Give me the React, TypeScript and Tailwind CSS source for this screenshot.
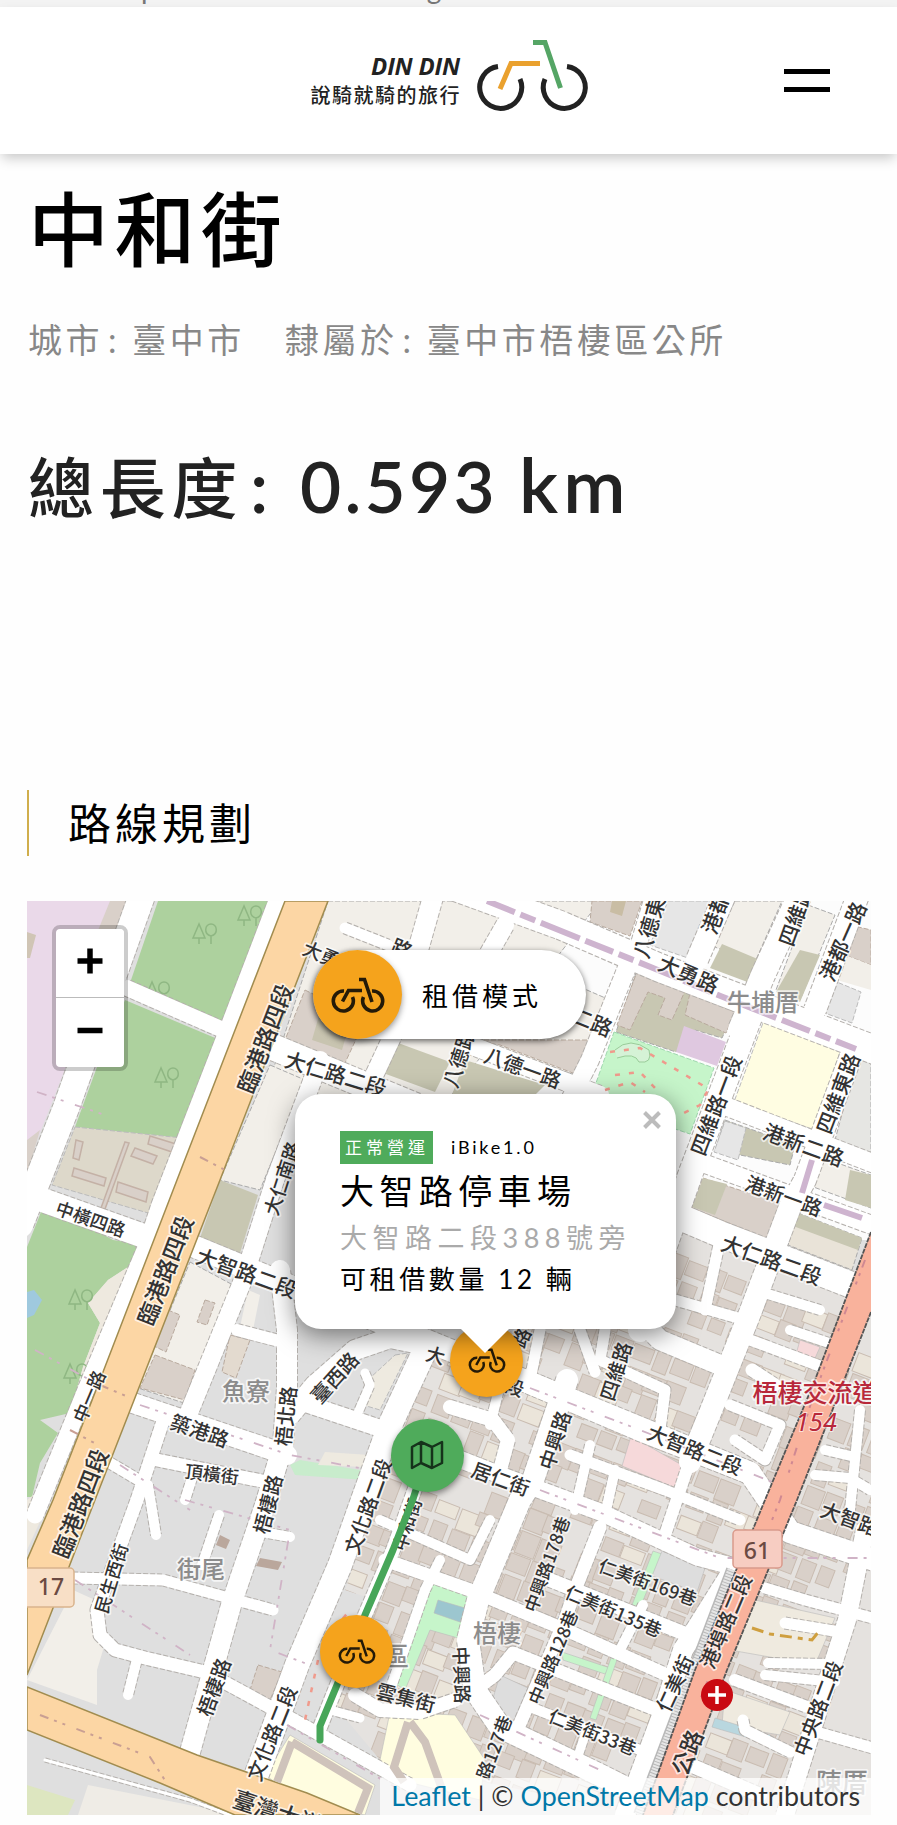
import React from "react";

type Pt = [number, number];
type Road = { p: string; w: number };
type Label = { t: string; x: number; y: number; a?: number; s?: number; ls?: number; c?: string };

const CJK = "font-['Lato','Noto_Sans_CJK_TC',sans-serif]";

const blocks: { p: string; c: string; s?: string }[] = [
  { p: "27,901 130,901 53,1100 27,1165", c: "#ead9e9" },
  { p: "110,901 150,901 125,965 70,1000 90,950", c: "#d9d0c9" },
  { p: "27,1140 40,1130 30,1165 27,1172", c: "#d9d0c9" },
  { p: "27,932 36,935 30,958 27,958", c: "#d0c5b5" },
  { p: "158,901 270,901 223,1022 130,983", c: "#add19e" },
  { p: "125,1000 220,1040 183,1138 75,1127 97,1067", c: "#add19e" },
  { p: "75,1127 183,1138 155,1215 52,1185", c: "#ddd8ca", s: "#bbb" },
  { p: "45,1202 113,1240 140,1244 128,1267 108,1280 88,1303 100,1323 83,1367 70,1413 40,1420 58,1433 40,1463 32,1497 27,1497 27,1247", c: "#add19e" },
  { p: "140,1244 145,1250 90,1380 70,1413 83,1367 100,1323 88,1303 108,1280 128,1267", c: "#eee9df" },
  { p: "27,1292 34,1290 42,1300 34,1315 27,1318", c: "#9fc9de" },
  { p: "27,1500 40,1490 50,1500 27,1550", c: "#eee9df" },
  { p: "328,901 600,901 440,1110 260,1110", c: "#f2efe9", s: "#aaa" },
  { p: "305,990 365,1020 345,1063 285,1040", c: "#d9d0c9", s: "#b9aa9e" },
  { p: "320,1012 350,1022 342,1050 312,1040", c: "#c8c4b0" },
  { p: "390,1040 450,1062 435,1092 375,1070", c: "#c8c7b2" },
  { p: "270,1065 305,1080 260,1190 220,1180", c: "#f2efe9", s: "#aaa" },
  { p: "220,1180 258,1195 240,1253 200,1238", c: "#c8c7b2" },
  { p: "190,1262 233,1285 190,1405 138,1388", c: "#f2efe9", s: "#aaa" },
  { p: "205,1300 215,1303 207,1325 197,1322", c: "#d9d0c9", s: "#b9aa9e" },
  { p: "168,1310 180,1315 166,1352 152,1345", c: "#d9d0c9", s: "#b9aa9e" },
  { p: "155,1355 195,1370 185,1400 140,1388", c: "#d9d0c9", s: "#b9aa9e" },
  { p: "248,1290 260,1295 253,1330 240,1327", c: "#f2efe9" },
  { p: "230,1335 250,1340 236,1378 222,1372", c: "#e3dacf", s: "#b9aa9e" },
  { p: "395,1355 408,1353 380,1410 363,1405 370,1378", c: "#eeeae0", s: "#bbb" },
  { p: "290,1465 300,1460 360,1470 365,1480 295,1475", c: "#c8eccc" },
  { p: "325,1452 370,1455 365,1467 318,1465", c: "#eeeae0" },
  { p: "260,1558 282,1562 278,1570 256,1566", c: "#baa79c" },
  { p: "220,1535 230,1540 226,1549 216,1545", c: "#baa79c" },
  { p: "258,1665 282,1672 270,1700 250,1690", c: "#d9d0c9", s: "#b9aa9e" },
  { p: "73,1590 95,1600 103,1650 97,1670 97,1705 27,1680", c: "#f2efe9" },
  { p: "27,1785 75,1800 68,1815 27,1815", c: "#dde6c0" },
  { p: "88,1785 240,1815 78,1815", c: "#efece6" },
  { p: "490,948 610,1000 590,1080 440,1030", c: "#f2efe9", s: "#aaa" },
  { p: "470,1040 590,1040 578,1075 500,1045", c: "#d9d0c9", s: "#b9aa9e" },
  { p: "465,1060 545,1085 530,1100 450,1100", c: "#c8c7b2" },
  { p: "592,901 642,901 630,936 590,922", c: "#d9d0c9", s: "#b9aa9e" },
  { p: "612,901 626,901 622,916 610,912", c: "#c9bda4" },
  { p: "668,901 715,901 688,958 650,945", c: "#e6e6e6", s: "#bbb" },
  { p: "735,901 782,901 755,962 712,946", c: "#f2efe9", s: "#aaa" },
  { p: "722,944 760,960 750,983 710,968", c: "#c8c7b2" },
  { p: "808,905 835,915 800,1000 776,990", c: "#f2efe9", s: "#aaa" },
  { p: "800,950 820,955 800,1002 776,992", c: "#c8c7b2" },
  { p: "850,925 871,930 871,965 845,955", c: "#d9d0c9", s: "#b9aa9e" },
  { p: "845,955 871,965 871,990 830,978", c: "#f2efe9" },
  { p: "832,980 861,992 852,1023 822,1012", c: "#e6e6e6", s: "#bbb" },
  { p: "637,970 735,1010 722,1038 695,1030 676,1052 616,1032", c: "#c8c7b2", s: "#aaa" },
  { p: "637,972 685,991 672,1020 658,1015 665,998 648,992 630,1030 617,1025", c: "#d9d0c9", s: "#b9aa9e" },
  { p: "690,993 735,1012 726,1033 685,1015", c: "#d9d0c9", s: "#b9aa9e" },
  { p: "684,1026 726,1042 717,1066 676,1052", c: "#dfc8e0" },
  { p: "614,1032 714,1068 690,1134 590,1100", c: "#c6f5ca", s: "#9fd8ae" },
  { p: "764,1020 840,1052 815,1130 734,1102", c: "#fffde2", s: "#bbb" },
  { p: "858,1055 871,1060 871,1155 835,1140", c: "#e6e6e3", s: "#aaa" },
  { p: "725,1120 795,1145 790,1165 715,1150", c: "#c8c7b2", s: "#aaa" },
  { p: "725,1121 746,1128 738,1160 714,1152", c: "#e6e6e6", s: "#bbb" },
  { p: "815,1155 871,1175 871,1208 808,1185", c: "#f2efe9", s: "#aaa" },
  { p: "850,1170 871,1175 871,1208 845,1200", c: "#c8c7b2" },
  { p: "703,1178 782,1204 770,1240 692,1208", c: "#d9d0c9", s: "#b9aa9e" },
  { p: "703,1178 727,1184 715,1215 692,1207", c: "#c8c7b2" },
  { p: "798,1213 862,1238 852,1270 788,1245", c: "#e9e3d8", s: "#aaa" },
  { p: "798,1213 862,1238 858,1250 793,1226", c: "#c8c7b2" },
];

const parks: { p: string; c: string }[] = [
  { p: "425,1582 480,1596 465,1640 430,1630 405,1690 390,1680", c: "#c6f5ca" },
  { p: "438,1600 465,1608 460,1622 434,1613", c: "#9cc6cf" },
  { p: "290,1735 375,1785 365,1815 300,1800 265,1775", c: "#fffde0" },
  { p: "390,1712 455,1715 485,1760 480,1800 400,1780 380,1760", c: "#fffde0" },
  { p: "631,1436 687,1468 678,1489 622,1466", c: "#f6d9da" },
  { p: "800,1340 820,1347 812,1365 795,1358", c: "#f6d9da" },
  { p: "653,1551 662,1554 640,1608 632,1605", c: "#c6f5ca" },
  { p: "562,1652 610,1668 605,1674 563,1660", c: "#c6f5ca" },
  { p: "612,1655 618,1657 596,1720 590,1718", c: "#c6f5ca" },
  { p: "755,1600 835,1618 815,1665 730,1650", c: "#efeadf" },
  { p: "725,1690 790,1712 780,1735 722,1725", c: "#efeadf" },
  { p: "715,1718 770,1735 790,1750 712,1727", c: "#b9d7df" },
  { p: "662,1551 705,1568 697,1592 652,1576", c: "#dddddd" },
  { p: "500,1675 528,1688 512,1725 490,1708", c: "#dddddd" },
];

const roads: Road[] = [
  { p: "277,901 222,1045 160,1205 145,1250 88,1385 35,1515", w: 17 },
  { p: "144,890 66,1108 20,1225", w: 26 },
  { p: "127,988 230,1033", w: 16 },
  { p: "20,1192 155,1240", w: 24 },
  { p: "345,928 388,945", w: 11 },
  { p: "435,890 418,950", w: 20 },
  { p: "372,1080 400,1020", w: 18 },
  { p: "275,1048 500,1141 720,1234 880,1296", w: 26 },
  { p: "193,1246 300,1290 430,1342 523,1380 640,1430 750,1473 790,1532 880,1562", w: 22 },
  { p: "523,1380 750,1473", w: 22 },
  { p: "133,1403 287,1455", w: 20 },
  { p: "157,1460 267,1482", w: 13 },
  { p: "110,1463 147,1485", w: 11 },
  { p: "165,1415 137,1500 97,1610 100,1635 115,1650 145,1658 205,1672 235,1688 290,1718 410,1785", w: 13 },
  { p: "148,1485 156,1535", w: 10 },
  { p: "192,1478 185,1500", w: 10 },
  { p: "219,1515 202,1565", w: 10 },
  { p: "73,1578 163,1580 273,1610", w: 11 },
  { p: "138,1655 128,1695", w: 10 },
  { p: "190,1752 232,1602 265,1505 283,1445 287,1387 287,1330 280,1270", w: 20 },
  { p: "188,1415 243,1280 275,1180 320,1060", w: 18 },
  { p: "237,1330 283,1342", w: 12 },
  { p: "262,1532 290,1537", w: 10 },
  { p: "240,1820 297,1665 340,1565 363,1500 390,1425 425,1350", w: 24 },
  { p: "290,1415 315,1385 355,1350 390,1338 425,1345", w: 20 },
  { p: "365,1373 370,1385 357,1415", w: 9 },
  { p: "295,1400 385,1430 500,1475 600,1512 697,1557 735,1567", w: 17 },
  { p: "450,1407 493,1420 508,1440 500,1470", w: 14 },
  { p: "427,1455 393,1550 365,1615 337,1685 319,1730", w: 14 },
  { p: "500,1385 490,1425", w: 10 },
  { p: "440,1560 425,1590 390,1690", w: 10 },
  { p: "380,1520 470,1560 490,1520", w: 10 },
  { p: "385,1560 470,1590 573,1633 667,1675", w: 13 },
  { p: "355,1695 380,1710 420,1712 455,1700", w: 14 },
  { p: "330,1710 360,1718", w: 9 },
  { p: "567,1380 533,1480 520,1500 478,1600 468,1640 475,1690 500,1727 600,1775 640,1795", w: 22 },
  { p: "475,1690 495,1675 513,1653 657,1710", w: 13 },
  { p: "600,1527 575,1590 565,1620 515,1735", w: 13 },
  { p: "550,1580 683,1633", w: 14 },
  { p: "643,1605 620,1650", w: 10 },
  { p: "530,1707 645,1752", w: 10 },
  { p: "585,1735 575,1765", w: 9 },
  { p: "590,1445 575,1510", w: 10 },
  { p: "690,1460 665,1535", w: 12 },
  { p: "570,1455 665,1490 740,1520", w: 11 },
  { p: "615,1470 605,1515", w: 10 },
  { p: "605,1330 600,1360 665,1390 660,1430", w: 11 },
  { p: "540,1330 530,1380", w: 11 },
  { p: "580,1330 595,1372", w: 11 },
  { p: "650,1330 660,1340 720,1365", w: 20 },
  { p: "675,1300 745,1320", w: 11 },
  { p: "720,1240 705,1310", w: 11 },
  { p: "755,1290 820,1310", w: 10 },
  { p: "750,1340 825,1368", w: 11 },
  { p: "790,1330 835,1345", w: 10 },
  { p: "752,1370 775,1385", w: 13 },
  { p: "730,1405 780,1425 765,1460 735,1440", w: 11 },
  { p: "855,1045 805,1180 790,1207 750,1313 710,1413 690,1462", w: 22 },
  { p: "735,1567 683,1650 663,1713 625,1815", w: 20 },
  { p: "750,1017 690,1175 660,1260 640,1330", w: 24 },
  { p: "450,885 560,925 660,968 880,1052", w: 28 },
  { p: "505,925 485,960", w: 18 },
  { p: "630,960 590,1060 570,1100", w: 18 },
  { p: "655,890 635,957", w: 16 },
  { p: "727,890 697,960", w: 22 },
  { p: "802,890 763,975 740,1030", w: 24 },
  { p: "860,890 815,1010", w: 22 },
  { p: "470,1045 600,1095", w: 18 },
  { p: "720,1104 880,1166", w: 18 },
  { p: "700,1162 880,1228", w: 18 },
  { p: "865,1530 847,1620 830,1673 785,1815", w: 18 },
  { p: "765,1588 805,1600 880,1620", w: 11 },
  { p: "785,1623 840,1632", w: 11 },
  { p: "768,1663 830,1664", w: 10 },
  { p: "765,1675 835,1682", w: 10 },
  { p: "735,1680 810,1708", w: 12 },
  { p: "743,1720 745,1730 790,1752", w: 11 },
  { p: "820,1733 880,1750", w: 11 },
  { p: "695,1767 760,1795", w: 14 },
  { p: "790,1535 870,1555", w: 12 },
  { p: "825,1450 855,1457", w: 10 },
  { p: "815,1475 850,1478 870,1490", w: 10 },
  { p: "860,1410 850,1510", w: 10 },
  { p: "45,1760 190,1800 230,1815", w: 3 },
];

const buildingCells: { x: number; y: number; w: number; h: number; tone: number }[] = [];
for (let r = 0; r < 28; r++) {
  for (let c = 0; c < 28; c++) {
    const k = Math.abs(Math.sin(r * 127.1 + c * 311.7) * 43758.5453) % 1;
    const m = Math.abs(Math.sin(r * 269.5 + c * 183.3) * 24634.6345) % 1;
    if (k < 0.18) continue;
    buildingCells.push({ x: c * 21 + m * 5, y: r * 24 + k * 5, w: 12 + k * 11, h: 13 + m * 11, tone: k });
  }
}

const labels: Label[] = [
  { t: "臨港路四段", x: 264, y: 1038, a: -69, s: 23 },
  { t: "臨港路四段", x: 164, y: 1270, a: -69, s: 23 },
  { t: "臨港路四段", x: 79, y: 1503, a: -69, s: 23 },
  { t: "大勇", x: 322, y: 953, a: 22, s: 19 },
  { t: "八德二路", x: 573, y: 1013, a: 22 },
  { t: "路", x: 402, y: 948, a: 22 },
  { t: "大仁路二段", x: 336, y: 1073, a: 17 },
  { t: "大仁南路", x: 281, y: 1178, a: -72, s: 19 },
  { t: "八德路", x: 458, y: 1058, a: -72, s: 20 },
  { t: "八德一路", x: 523, y: 1067, a: 20, s: 20 },
  { t: "八德東路", x: 651, y: 917, a: -74, s: 21 },
  { t: "港都路", x: 718, y: 903, a: -70, s: 21 },
  { t: "四維路", x: 795, y: 915, a: -70, s: 21 },
  { t: "港都一路", x: 842, y: 941, a: -66, s: 21 },
  { t: "大勇路", x: 689, y: 973, a: 23, s: 21 },
  { t: "四維路一段", x: 715, y: 1105, a: -69, s: 21 },
  { t: "四維東路", x: 837, y: 1093, a: -69, s: 21 },
  { t: "港新二路", x: 804, y: 1144, a: 20, s: 21 },
  { t: "港新一路", x: 784, y: 1195, a: 20, s: 20 },
  { t: "大仁路二段", x: 772, y: 1259, a: 20, s: 21 },
  { t: "中橫四路", x: 91, y: 1218, a: 19, s: 18 },
  { t: "大智路二段", x: 247, y: 1272, a: 20, s: 21 },
  { t: "中一路", x: 88, y: 1396, a: -67, s: 18 },
  { t: "築港路", x: 200, y: 1430, a: 19, s: 20 },
  { t: "頂橫街", x: 212, y: 1473, a: 7, s: 18 },
  { t: "梧北路", x: 285, y: 1416, a: -84, s: 20 },
  { t: "梧棲路", x: 267, y: 1504, a: -76, s: 20 },
  { t: "梧棲路", x: 213, y: 1687, a: -70, s: 20 },
  { t: "臺西路", x: 334, y: 1377, a: -48, s: 20 },
  { t: "文化路二段", x: 367, y: 1506, a: -70, s: 20 },
  { t: "中和街", x: 406, y: 1524, a: -72, s: 18 },
  { t: "文化路二段", x: 271, y: 1733, a: -68, s: 20 },
  { t: "民生西街", x: 110, y: 1578, a: -73, s: 18 },
  { t: "雲集街", x: 406, y: 1697, a: 14, s: 20 },
  { t: "大", x: 436, y: 1354, a: 15, s: 19 },
  { t: "段", x: 515, y: 1386, a: 20, s: 19 },
  { t: "路", x: 520, y: 1337, a: -65, s: 19 },
  { t: "四維路", x: 615, y: 1371, a: -72, s: 20 },
  { t: "中興路", x: 554, y: 1440, a: -72, s: 20 },
  { t: "居仁街", x: 501, y: 1478, a: 20, s: 20 },
  { t: "大智路二段", x: 695, y: 1449, a: 22, s: 20 },
  { t: "中興路178巷", x: 546, y: 1564, a: -70, s: 17.5 },
  { t: "中興路128巷", x: 552, y: 1657, a: -67, s: 17.5 },
  { t: "仁美街169巷", x: 648, y: 1581, a: 20, s: 18 },
  { t: "仁美街135巷", x: 614, y: 1610, a: 23, s: 18 },
  { t: "仁美街33巷", x: 593, y: 1731, a: 22, s: 18 },
  { t: "中興路", x: 463, y: 1675, a: 88, s: 19 },
  { t: "路127巷", x: 493, y: 1747, a: -69, s: 18 },
  { t: "仁美街", x: 674, y: 1683, a: -65, s: 20 },
  { t: "港埠路二段", x: 725, y: 1621, a: -67, s: 20 },
  { t: "中央路二段", x: 817, y: 1708, a: -69, s: 20 },
  { t: "大智路", x: 850, y: 1518, a: 20, s: 20 },
  { t: "公路", x: 686, y: 1752, a: -68, s: 23 },
  { t: "臺灣大道", x: 278, y: 1811, a: 18, s: 23 },
];

const places: Label[] = [
  { t: "牛埔厝", x: 763, y: 1000, s: 24 },
  { t: "魚寮", x: 246, y: 1389, s: 24 },
  { t: "街尾", x: 201, y: 1567, s: 24 },
  { t: "梧棲", x: 497, y: 1631, s: 24 },
  { t: "區", x: 396, y: 1654, s: 26 },
  { t: "陳厝", x: 842, y: 1780, s: 26 },
];

const trees: Pt[] = [[204, 934], [249, 916], [166, 1078], [157, 992], [80, 1300], [75, 1374]];

function MapLabel({ l, place }: { l: Label; place?: boolean }) {
  return (
    <text
      x={l.x}
      y={l.y}
      transform={`rotate(${l.a ?? 0} ${l.x} ${l.y})`}
      fontSize={l.s ?? 21}
      fontWeight={500}
      letterSpacing={l.ls ?? 0}
      textAnchor="middle"
      dominantBaseline="central"
      fill={l.c ?? (place ? "#8c8c8c" : "#333")}
      stroke="#fff"
      strokeOpacity={0.7}
      strokeWidth={3.5}
      strokeLinejoin="round"
      paintOrder="stroke"
    >
      {l.t}
    </text>
  );
}

function BikeIcon({ className }: { className: string }) {
  return (
    <svg viewBox="0 0 54 36" className={className} fill="none" stroke="#241a08" strokeWidth="3.600">
      <path d="M13 14A10 10 0 1 0 21.5 20" />
      <path d="M32.5 20A10 10 0 1 0 41 14" />
      <path d="M11.5 24.500L17.500 13.500H31M28 2.500H33.500L41 25" />
    </svg>
  );
}

function Marker({ x, y, className, children }: { x: number; y: number; className: string; children: React.ReactNode }) {
  return (
    <div
      className={`absolute flex size-[73px] items-center justify-center rounded-full shadow-[0_3px_6px_rgba(0,0,0,0.45)] ${className}`}
      style={{ left: x - 27 - 36.5, top: y - 901 - 36.5 }}
    >
      {children}
    </div>
  );
}

function CityMap() {
  const west = "285,901 177,1180 98,1385 53,1500 27,1560 27,1675 95,1500 138,1390 220,1180 328,901";
  const south = "27,1687 197,1755 307,1793 360,1815 235,1815 160,1783 27,1730";
  const east = "871,1232 815,1380 765,1500 695,1670 643,1815 673,1815 727,1670 797,1500 871,1312";
  return (
    <svg viewBox="27 901 844 914" className="block h-[914px] w-[844px] font-['Noto_Sans_CJK_TC',sans-serif]">
      <defs>
        <clipPath id="town">
          <path d="M425 1345L520 1330L560 1310L690 1210L871 1290V1815H640L380 1760L330 1700L375 1600L345 1590L385 1470Z" />
        </clipPath>
      </defs>
      <rect x="27" y="901" width="844" height="914" fill="#dfdfdf" />
      <path d="M420 901H871V1240H420Z" fill="#fcfcfc" />
      {blocks.map((b, i) => (
        <polygon key={i} points={b.p} fill={b.c} stroke={b.s ?? "none"} strokeDasharray="5 2" />
      ))}
      <g clipPath="url(#town)">
        <path d="M300 1200H871V1815H300Z" fill="#e5e2df" />
        <g transform="translate(396 1144) rotate(21)" stroke="#c9bcb1" strokeWidth="1">
          {buildingCells.map((b, i) => (
            <rect key={i} x={b.x} y={b.y} width={b.w} height={b.h} fill={b.tone > 0.85 ? "#ebe5da" : "#d9d0c9"} />
          ))}
        </g>
      </g>
      {parks.map((b, i) => (
        <polygon key={i} points={b.p} fill={b.c} stroke="#bbb" strokeWidth="0.6" />
      ))}
      <g fill="#d9d0c9" stroke="#c4b1a6" strokeWidth="1.500">
        <path d="M76 1140l7 2l-4 18l-6-2zM74 1168l32 10l-2 8l-32-10zM118 1182l30 10l-2 10l-30-10zM135 1148l22 8l-4 8l-22-8zM125 1142l4 1l-24 66l-4-1zM150 1136l26 8l-4 8l-24-8z" />
      </g>
      <g fill="none" stroke="#8fb783" strokeWidth="1.500">
        {trees.map(([x, y], i) => (
          <path key={i} d={`M${x - 5} ${y - 10}l-6 14h12zM${x - 5} ${y + 4}v6M${x + 7} ${y + 10}v-8c-8-2-6-12 0-12s8 10 0 12`} />
        ))}
      </g>
      <g fill="none" stroke="#b4b0ac" strokeDasharray="5 2" strokeLinejoin="round">
        {roads.map((r, i) => (
          <polyline key={i} points={r.p} strokeWidth={r.w + 2} />
        ))}
      </g>
      <g fill="none" stroke="#fff" strokeLinejoin="round" strokeLinecap="round">
        {roads.map((r, i) => (
          <polyline key={i} points={r.p} strokeWidth={r.w} />
        ))}
      </g>
      <path
        d="M37 1092L105 1115M140 1405L290 1455L370 1470M185 1500L290 1530L270 1650L310 1665M75 1580L190 1655M287 1725L400 1790M530 1388L640 1430L780 1485M540 1490L720 1558L871 1558M35 1350L90 1380M120 1465L190 1510M480 1715L600 1770"
        fill="none"
        stroke="#d0b3c6"
        strokeWidth="1.800"
        strokeDasharray="10 6 3 6 3 12"
      />
      <polygon points={west} fill="#fcd6a4" stroke="#a18c4f" strokeWidth="1.500" />
      <polygon points={south} fill="#fcd6a4" stroke="#a18c4f" strokeWidth="1.500" />
      <path d="M28 1640V1700L60 1701L40 1660Z" fill="#fcd6a4" opacity="0" />
      <path d="M40 1715L150 1757L168 1785M100 1385L126 1396M70 1430L100 1446M200 1157L225 1170" fill="none" stroke="#c99f93" strokeWidth="2" strokeDasharray="9 6 3 6 3 12" />
      <path d="M733 1570L640 1815" stroke="#b8b8b8" strokeWidth="14" />
      <path d="M733 1570L640 1815" stroke="#e6e6e6" strokeWidth="11" strokeDasharray="2 1" />
      <polygon points={east} fill="#f9b29c" />
      <path d="M871 1232L815 1380L765 1500L695 1670L643 1815M871 1312L797 1500L727 1670L673 1815" fill="none" stroke="#555" strokeWidth="1.800" strokeDasharray="5 1" />
      <path d="M865 1260L812 1400L780 1500L700 1700" fill="none" stroke="#cf8892" strokeWidth="2" strokeDasharray="8 6 3 6 3 24" />
      <path d="M487 901L653 968L723 997L856 1049" fill="none" stroke="#ceb4cf" strokeWidth="6" strokeDasharray="30 6 16 6 42 6" />
      <path d="M812 1160L802 1193M824 1205L862 1218" fill="none" stroke="#ceb4cf" strokeWidth="6" />
      <path d="M615 1050q15-14 34 0q4 14-10 12q-4-10-22-4" fill="#d5f2d6" stroke="#9c9" />
      <path d="M610 1052L640 1048L702 1085L708 1090L700 1105L680 1115M615 1075L640 1072L655 1088M605 1090L630 1082L645 1092M325 1640L350 1610M318 1660L305 1720" fill="none" stroke="#f09a8c" strokeWidth="2.500" strokeDasharray="5 9" />
      <path d="M335 1005q10 5 14 10q4 10-4 16q-8-12-10-26" fill="#a9d5e6" />
      <path d="M752 1628L770 1634L812 1640L820 1630" fill="none" stroke="#cf9f3f" strokeWidth="3" strokeDasharray="12 6 5 6" />
      <path d="M408 1722l-14 45l10 15M410 1722l15 20l18 50M292 1742l76 46l-10 25M292 1742l-15 40" fill="none" stroke="#cfc3bb" strokeWidth="8" />
      {places.map((l, i) => (
        <MapLabel key={i} l={l} place />
      ))}
      {labels.map((l, i) => (
        <MapLabel key={i} l={l} />
      ))}
      <MapLabel l={{ t: "梧棲交流道", x: 815, y: 1391, s: 25, c: "#b8283a" }} />
      <text x="816" y="1431" fontSize="25" fontStyle="italic" textAnchor="middle" fill="#b8283a" stroke="#fff" strokeOpacity=".6" strokeWidth="2" paintOrder="stroke" className="font-['Noto_Sans',sans-serif]">154</text>
      <g className="font-['Noto_Sans',sans-serif]" fontSize="23" fontWeight="500" fill="#6b4a42" textAnchor="middle">
        <rect x="20" y="1568" width="54" height="39" rx="4" fill="#f8dfc6" stroke="#d9b48d" strokeWidth="1.500" />
        <text x="51" y="1595">17</text>
        <rect x="733" y="1530" width="49" height="38" rx="4" fill="#f7cdc2" stroke="#d99a8c" strokeWidth="1.500" />
        <text x="757" y="1559">61</text>
      </g>
      <circle cx="717" cy="1695" r="16" fill="#c90a12" />
      <path d="M717 1686v18M708 1695h18" stroke="#fff" strokeWidth="3.500" />
      <path d="M427 1455L412.700 1500L393 1550L365 1615L337 1685L320 1726L320 1740" fill="none" stroke="#47a659" strokeWidth="7" strokeLinecap="round" strokeLinejoin="round" />
    </svg>
  );
}

function Logo() {
  return (
    <div className="flex items-start pt-[33px] pl-[310px]">
      <div className="flex w-[150px] flex-col items-end text-[#222]">
        <span className="mt-[9px] font-['Open_Sans',sans-serif] text-[24px] leading-[34px] font-bold tracking-[-0.200px] whitespace-nowrap italic">DIN DIN</span>
        <span className="-mr-[1px] font-['Noto_Sans_CJK_TC',sans-serif] text-[20px] leading-[24px] font-medium tracking-[1.500px] whitespace-nowrap">說騎就騎的旅行</span>
      </div>
      <svg viewBox="476 38 114 75" className="-mt-[2px] ml-[16px] h-[75px] w-[114px]" fill="none" strokeWidth="5">
        <path d="M498 66.500A21 21 0 1 0 520 79" stroke="#222" />
        <path d="M545 79A21 21 0 1 0 567 66.500" stroke="#222" />
        <path d="M500 89L511 63.500H540" stroke="#eaa12e" />
        <path d="M533 42.500H545L560.500 88" stroke="#55a565" />
      </svg>
    </div>
  );
}

export default function App() {
  return (
    <div className={`h-[1825px] w-[897px] overflow-hidden bg-[#fefefe] text-black ${CJK}`}>
      <div className="flex h-[7px] overflow-hidden bg-[#f3f3f3] text-[28px] leading-[28px] text-[#777]">
        <span className="-mt-[26px] ml-[141px]">p</span>
        <span className="-mt-[26px] ml-[270px]">g</span>
      </div>
      <header className="relative flex h-[147px] bg-white shadow-[0_6px_12px_-2px_rgba(0,0,0,0.22)]">
        <Logo />
        <button aria-label="選單" className="mt-[62px] ml-[194px] flex h-[23px] w-[46px] flex-col justify-between">
          <span className="h-[5px] w-full bg-black" />
          <span className="h-[5px] w-full bg-black" />
        </button>
      </header>

      <main className="px-[27px]">
        <h1 className="pt-[17px] pl-[1px] text-[81px] leading-[116px] font-medium tracking-[5.500px]">中和街</h1>
        <p className="mt-[28px] flex pl-px text-[34px] leading-[50px] tracking-[3.500px] whitespace-pre text-[#888]">
          <span className="w-[257px]">城市<span className="pl-[5px]">:</span> 臺中市</span>
          <span>隸屬於<span className="pl-[5px]">:</span> 臺中市梧棲區公所</span>
        </p>
        <div className="mt-[69px] flex h-[100px] items-baseline pl-px text-[66px] leading-[100px] font-medium whitespace-nowrap text-[#222]">
          <span className="w-[272px] tracking-[5.700px]">總長度<span className="pl-[7px] text-[72px] font-semibold">:</span></span>
          <span className="w-[219px] text-[71px] font-semibold tracking-[3.300px]">0.593</span>
          <span className="text-[75px] font-semibold tracking-[5px]">km</span>
        </div>
        <h2 className="mt-[256px] flex h-[66px] items-center border-l-2 border-[#d0ae4c] pt-[2px] pl-[39px] text-[43px] leading-[66px] tracking-[4px]">路線規劃</h2>

        <section className="relative mt-[45px] h-[914px] w-[844px] overflow-hidden">
          <CityMap />

          <Marker x={486.500} y={1360} className="bg-[#f5a31c]">
            <BikeIcon className="h-[25px] w-[38px]" />
          </Marker>
          <Marker x={356.500} y={1651} className="bg-[#f5a31c]">
            <BikeIcon className="h-[25px] w-[38px]" />
          </Marker>
          <Marker x={427} y={1455} className="bg-[#4fab5b]">
            <svg viewBox="0 0 34 30" className="h-[30px] w-[34px]" fill="none" stroke="#16321b" strokeWidth="2.500" strokeLinejoin="round">
              <path d="M2 7L11 2L22 7L32 2V23L22 28L11 23L2 28ZM11 2V23M22 7V28" />
            </svg>
          </Marker>

          <div className="absolute top-[24px] left-[25px] flex w-[76px] flex-col overflow-hidden rounded-[8px] border-4 border-black/20 bg-clip-padding">
            <button className="flex h-[69px] items-center justify-center rounded-t-[4px] border-b border-[#bbb] bg-white pb-[5px]">
              <svg viewBox="0 0 26 26" className="size-[26px]" stroke="#000" strokeWidth="5.500"><path d="M13 0.500V25.500M0.500 13H25.500" /></svg>
            </button>
            <button className="flex h-[69px] items-center justify-center rounded-b-[4px] bg-white">
              <svg viewBox="0 0 26 26" className="size-[26px]" stroke="#000" strokeWidth="5.500"><path d="M0.500 10.500H25.500" /></svg>
            </button>
          </div>

          <div className="absolute top-[49px] left-[286px] flex h-[89px] w-[273px] items-center rounded-full bg-white shadow-[0_2px_6px_rgba(0,0,0,0.6)]">
            <div className="flex size-[89px] items-center justify-center rounded-full bg-[#f5a31c] shadow-[0_3px_6px_rgba(0,0,0,0.4)]">
              <BikeIcon className="h-[36px] w-[54px]" />
            </div>
            <span className="pt-[3px] pl-[20px] text-[26px] leading-[40px] tracking-[4px] whitespace-nowrap">租借模式</span>
          </div>

          <div className="absolute top-[193px] left-[268px] h-[235px] w-[381px] rounded-[26px] bg-white pt-[37px] pl-[45px] whitespace-nowrap shadow-[0_6px_26px_rgba(0,0,0,0.5)]">
            <div className="flex h-[33px] items-center">
              <span className="flex h-[33px] w-[93px] items-center bg-[#4fab5b] pl-[5px] text-[17px] tracking-[4px] text-white">正常營運</span>
              <span className="pl-[18px] text-[18px] tracking-[2.800px]">iBike1.0</span>
            </div>
            <div className="mt-[2px] text-[34px] leading-[50px] tracking-[5.400px]">大智路停車場</div>
            <div className="text-[27px] leading-[44px] tracking-[5.500px] text-[#aaa]">大智路二段388號旁</div>
            <div className="text-[26px] leading-[38px] tracking-[3.600px]">可租借數量 12 輛</div>
            <svg viewBox="0 0 18 18" className="absolute top-[17px] right-[15px] size-[18px]" stroke="#bcbcbc" strokeWidth="4"><path d="M1.500 1.500L16.500 16.500M16.500 1.500L1.500 16.500" /></svg>
            <svg viewBox="0 0 50 25" className="absolute top-[234px] left-[165px] h-[25px] w-[50px]"><path d="M0 0H50L25 25Z" fill="#fff" /></svg>
          </div>

          <div className="absolute right-0 bottom-0 flex h-[37px] items-center bg-white/75 pr-[11px] pl-[11px] text-[26.800px] leading-[37px] whitespace-pre text-[#333]">
            <span className="text-[#0078a8]">Leaflet</span> | © <span className="text-[#0078a8]">OpenStreetMap</span> contributors
          </div>
        </section>
      </main>
    </div>
  );
}
